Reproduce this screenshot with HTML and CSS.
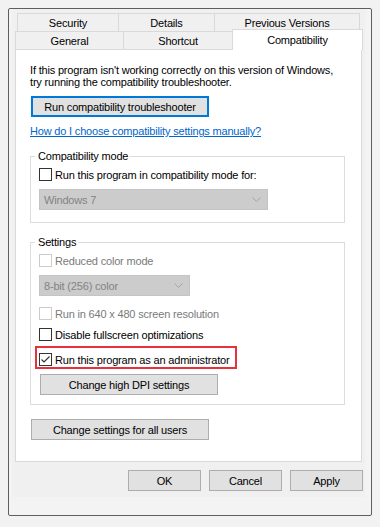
FILE: index.html
```html
<!DOCTYPE html>
<html lang="en">
<head>
<meta charset="utf-8">
<title>Properties - Compatibility</title>
<link rel="stylesheet" href="styles.css">
</head>
<body>
<div class="frame">
  <div class="dialog">
    <div class="tabs">
      <div class="tabrow row1">
        <div class="tab t-security">Security</div>
        <div class="tab t-details">Details</div>
        <div class="tab t-prev">Previous Versions</div>
      </div>
      <div class="tabrow row2">
        <div class="tab t-general">General</div>
        <div class="tab t-shortcut">Shortcut</div>
        <div class="tab t-compat selected">Compatibility</div>
      </div>
    </div>
    <div class="panel">
      <p class="intro">If this program isn't working correctly on this version of Windows,<br>try running the compatibility troubleshooter.</p>
      <button class="btn btn-wide focused">Run compatibility troubleshooter</button>
      <a class="link" href="#">How do I choose compatibility settings manually?</a>

      <fieldset class="group group-compat">
        <legend>Compatibility mode</legend>
        <div class="check">
          <span class="box"></span>
          <span>Run this program in compatibility mode for:</span>
        </div>
        <div class="select select-os">
          <span>Windows 7</span>
          <svg class="chev" width="9" height="5" viewBox="0 0 9 5"><polyline points="0.5,0.5 4.5,4.5 8.5,0.5" fill="none" stroke="#a6a6a6" stroke-width="1"/></svg>
        </div>
      </fieldset>

      <fieldset class="group group-settings">
        <legend>Settings</legend>
        <div class="check disabled">
          <span class="box"></span>
          <span>Reduced color mode</span>
        </div>
        <div class="select select-color">
          <span>8-bit (256) color</span>
          <svg class="chev" width="9" height="5" viewBox="0 0 9 5"><polyline points="0.5,0.5 4.5,4.5 8.5,0.5" fill="none" stroke="#a6a6a6" stroke-width="1"/></svg>
        </div>
        <div class="check disabled row-640">
          <span class="box"></span>
          <span>Run in 640 x 480 screen resolution</span>
        </div>
        <div class="check row-full">
          <span class="box"></span>
          <span>Disable fullscreen optimizations</span>
        </div>
        <div class="check row-admin">
          <span class="box checked">
            <svg width="11" height="11" viewBox="0 0 11 11"><polyline points="1.5,5.5 4,8 9.5,2.5" fill="none" stroke="#333" stroke-width="1.2"/></svg>
          </span>
          <span>Run this program as an administrator</span>
        </div>
        <button class="btn btn-wide btn-dpi">Change high DPI settings</button>
      </fieldset>

      <button class="btn btn-wide btn-all">Change settings for all users</button>
    </div>
    <div class="actions">
      <button class="btn btn-small">OK</button>
      <button class="btn btn-small">Cancel</button>
      <button class="btn btn-small">Apply</button>
    </div>
  </div>
</div>
</body>
</html>
```
FILE: styles.css
```css
* {
  box-sizing: border-box;
}

body {
  margin: 0;
  background: #f2f2f2;
  font-family: "Liberation Sans", Arial, sans-serif;
  font-size: 11px;
  letter-spacing: -0.18px;
  line-height: 12px;
  color: #000;
}

.frame {
  margin: 8px 8px 0;
  width: 364px;
  height: 508px;
  border: 1px solid #5e5e5e;
  border-radius: 2px;
  background: #f3f3f3;
}

.dialog {
  margin: 0 6px 0 3px;
  height: 488px;
  background: #f0f0f0;
  padding: 4px 0 0 3px;
}

/* Tabs */
.tabrow {
  display: flex;
  height: 18px;
}

.row1 {
  margin-left: 2px;
}

.tab {
  border: 1px solid #d9d9d9;
  border-bottom: none;
  background: #f0f0f0;
  display: flex;
  align-items: center;
  justify-content: center;
  margin-left: -1px;
  height: 18px;
}

.tab:first-child {
  margin-left: 0;
}

.t-security { width: 102px; }
.t-details { width: 97px; }
.t-prev { width: 146px; }
.t-general { width: 109px; }
.t-shortcut { width: 110px; }
.t-compat { width: 131px; }

.tab.selected {
  background: #fff;
  height: 21px;
  margin-top: -2px;
  position: relative;
  z-index: 1;
}

/* Panel */
.panel {
  width: 347px;
  height: 413px;
  border: 1px solid #d9d9d9;
  background: #fff;
  padding: 14px 16px 0 14px;
}

.intro {
  margin: 0;
}

.btn {
  display: flex;
  align-items: center;
  justify-content: center;
  height: 21px;
  padding: 0;
  border: 1px solid #adadad;
  background: #e1e1e1;
  font: inherit;
  letter-spacing: inherit;
  color: #000;
}

.btn-wide {
  width: 178px;
  margin-left: 1px;
}

.btn.focused {
  border: 2px solid #0078d7;
  margin-top: 8px;
}

.link {
  display: block;
  width: fit-content;
  margin-top: 8px;
  color: #0066cc;
  text-decoration: underline;
}

/* Group boxes */
.group {
  margin: 13px 0 0;
  border: 1px solid #dcdcdc;
  padding: 6px 0 12px 8px;
  min-width: 0;
}

.group legend {
  padding: 0 2px 0 3px;
  margin-left: -4px;
}

.group-settings {
  padding-bottom: 9px;
}

.check {
  display: flex;
  align-items: center;
  gap: 3px;
  height: 13px;
}

.box {
  width: 13px;
  height: 13px;
  border: 1px solid #333;
  background: #fff;
  flex: none;
  display: flex;
  align-items: center;
  justify-content: center;
}

.check.disabled {
  color: #7a7a7a;
}

.check.disabled .box {
  border-color: #cccccc;
}

.select {
  display: flex;
  align-items: center;
  justify-content: space-between;
  height: 21px;
  margin-top: 8px;
  padding: 0 6px 0 4px;
  background: #cccccc;
  border: 1px solid #c4c4c4;
  color: #838383;
}

.select-os { width: 229px; }
.select-color { width: 151px; }

.row-640 { margin-top: 11px; }
.row-full { margin-top: 8px; }

.row-admin {
  width: fit-content;
  height: auto;
  margin: 5px 0 0 -4px;
  padding: 5px 5px 1px 2px;
  border: 2px solid #e8313a;
}

.btn-dpi {
  margin-top: 5px;
}

.btn-all {
  margin-top: 14px;
}

/* Bottom buttons */
.actions {
  display: flex;
  justify-content: flex-end;
  gap: 8px;
  margin-top: 8px;
  padding-right: 2px;
}

.btn-small {
  width: 73px;
}
```
